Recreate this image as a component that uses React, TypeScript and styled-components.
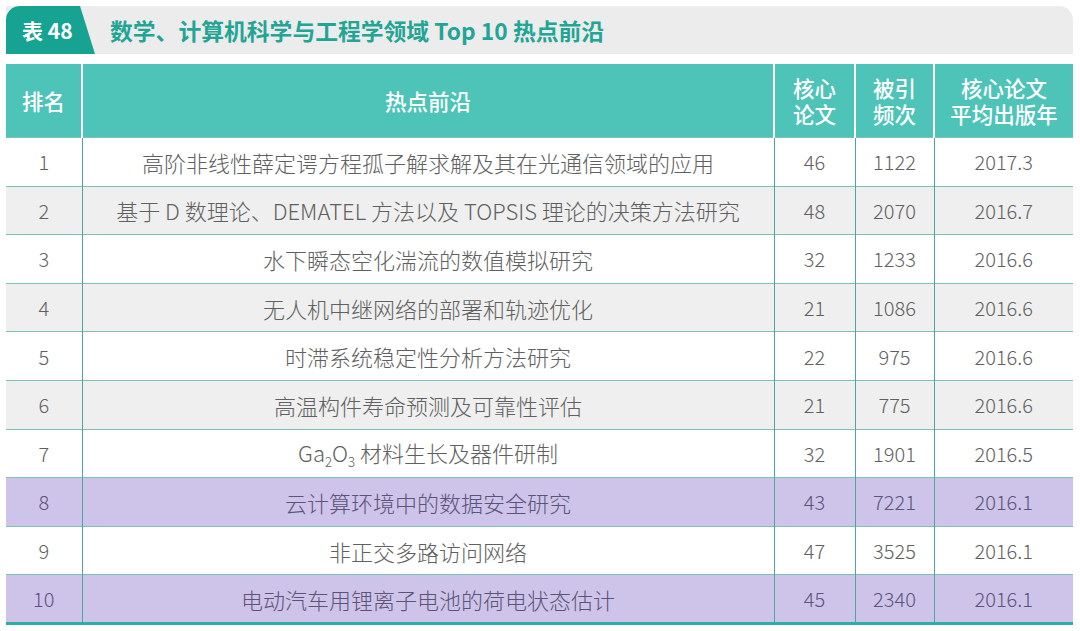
import React from "react";
import styled, { createGlobalStyle } from "styled-components";

const GlobalStyle = createGlobalStyle`
  html, body {
    margin: 0;
    padding: 0;
    background: #fff;
  }
  body {
    font-family: "Noto Sans CJK SC", "Noto Sans", sans-serif;
  }
`;

const Page = styled.div`
  width: 1067px;
  padding: 6px 0 0 6px;
`;

const TitleBar = styled.div`
  display: flex;
  align-items: center;
  height: 48px;
  background: #ececec;
  border-top-right-radius: 14px;
`;

const Tab = styled.div`
  display: flex;
  align-items: center;
  width: 89px;
  height: 100%;
  padding-left: 16px;
  box-sizing: border-box;
  background: #17a391;
  border-top-left-radius: 14px;
  clip-path: polygon(0 0, 74px 0, 100% 100%, 0 100%);
  color: #fff;
  font-size: 21px;
  font-weight: 700;
`;

const TitleText = styled.div`
  margin-left: 15px;
  color: #22a594;
  font-size: 22.8px;
  font-weight: 700;
`;

const Table = styled.table`
  margin-top: 10px;
  width: 1067px;
  border-collapse: collapse;
  table-layout: fixed;
  border-bottom: 3px solid #2eaea3;
`;

const HeadCell = styled.th`
  height: 73px;
  padding: 0;
  background: #4ec3b7;
  color: #fff;
  font-size: 21.5px;
  font-weight: 500;
  line-height: 26px;
  border-left: 2px solid #fff;
  &:first-child {
    border-left: none;
  }
`;

type Tone = "white" | "gray" | "purple";

const toneBg: Record<Tone, string> = {
  white: "#ffffff",
  gray: "#efefef",
  purple: "#cec4ea",
};

const Row = styled.tr<{ $tone: Tone }>`
  height: 48.6px;
  background: ${(p) => toneBg[p.$tone]};
  color: ${(p) => (p.$tone === "purple" ? "#5c5378" : "#606060")};
  border-top: 1px solid #7cc2ba;
`;

const Cell = styled.td<{ $wide?: boolean }>`
  padding: 0;
  text-align: center;
  font-size: ${(p) => (p.$wide ? "22px" : "20px")};
  font-weight: 300;
  border-left: 1px solid #4aa69e;
  &:first-child {
    border-left: none;
  }
`;

const Sub = styled.sub`
  font-size: 0.6em;
`;

const rows: { topic: React.ReactNode; core: string; cited: string; year: string; tone: Tone }[] = [
  { topic: "高阶非线性薛定谔方程孤子解求解及其在光通信领域的应用", core: "46", cited: "1122", year: "2017.3", tone: "white" },
  { topic: "基于 D 数理论、DEMATEL 方法以及 TOPSIS 理论的决策方法研究", core: "48", cited: "2070", year: "2016.7", tone: "gray" },
  { topic: "水下瞬态空化湍流的数值模拟研究", core: "32", cited: "1233", year: "2016.6", tone: "white" },
  { topic: "无人机中继网络的部署和轨迹优化", core: "21", cited: "1086", year: "2016.6", tone: "gray" },
  { topic: "时滞系统稳定性分析方法研究", core: "22", cited: "975", year: "2016.6", tone: "white" },
  { topic: "高温构件寿命预测及可靠性评估", core: "21", cited: "775", year: "2016.6", tone: "gray" },
  {
    topic: (
      <>
        Ga<Sub>2</Sub>O<Sub>3</Sub> 材料生长及器件研制
      </>
    ),
    core: "32",
    cited: "1901",
    year: "2016.5",
    tone: "white",
  },
  { topic: "云计算环境中的数据安全研究", core: "43", cited: "7221", year: "2016.1", tone: "purple" },
  { topic: "非正交多路访问网络", core: "47", cited: "3525", year: "2016.1", tone: "white" },
  { topic: "电动汽车用锂离子电池的荷电状态估计", core: "45", cited: "2340", year: "2016.1", tone: "purple" },
];

const App = () => {
  return (
    <>
      <GlobalStyle />
      <Page>
        <TitleBar>
          <Tab>表 48</Tab>
          <TitleText>数学、计算机科学与工程学领域 Top 10 热点前沿</TitleText>
        </TitleBar>
        <Table>
          <colgroup>
            <col style={{ width: 76 }} />
            <col style={{ width: 692 }} />
            <col style={{ width: 81 }} />
            <col style={{ width: 79 }} />
            <col style={{ width: 139 }} />
          </colgroup>
          <thead>
            <tr>
              <HeadCell>排名</HeadCell>
              <HeadCell>热点前沿</HeadCell>
              <HeadCell>核心<br />论文</HeadCell>
              <HeadCell>被引<br />频次</HeadCell>
              <HeadCell>核心论文<br />平均出版年</HeadCell>
            </tr>
          </thead>
          <tbody>
            {rows.map((r, i) => (
              <Row key={i} $tone={r.tone}>
                <Cell>{i + 1}</Cell>
                <Cell $wide>{r.topic}</Cell>
                <Cell>{r.core}</Cell>
                <Cell>{r.cited}</Cell>
                <Cell>{r.year}</Cell>
              </Row>
            ))}
          </tbody>
        </Table>
      </Page>
    </>
  );
};

export default App;
